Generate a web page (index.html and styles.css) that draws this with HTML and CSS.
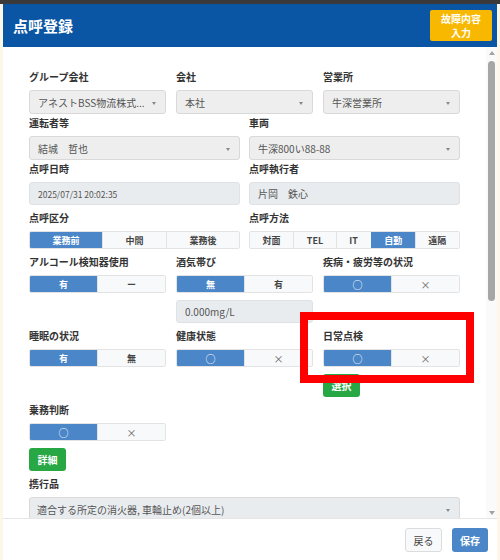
FILE: index.html
```html
<!DOCTYPE html>
<html lang="ja">
<head>
    <meta charset="UTF-8">
    <meta name="viewport" content="width=device-width, initial-scale=1.0">
    <title>点呼登録</title>
    <link rel="stylesheet" href="styles.css">
</head>
<body>
    <div class="modal">
        <div class="modal-header">
            <h2>点呼登録</h2>
            <button type="button" class="btn-fault">故障内容<br>入力</button>
        </div>

        <div class="modal-body">
            <form class="form-area">
                <!-- 会社情報 -->
                <div class="row cols-3 tight">
                    <div class="field">
                        <label>グループ会社</label>
                        <div class="select"><span>アネストBSS物流株式...</span><i class="caret"></i></div>
                    </div>
                    <div class="field">
                        <label>会社</label>
                        <div class="select"><span>本社</span><i class="caret"></i></div>
                    </div>
                    <div class="field">
                        <label>営業所</label>
                        <div class="select"><span>牛深営業所</span><i class="caret"></i></div>
                    </div>
                </div>

                <div class="row cols-2 tight">
                    <div class="field">
                        <label>運転者等</label>
                        <div class="select"><span>結城　哲也</span><i class="caret"></i></div>
                    </div>
                    <div class="field">
                        <label>車両</label>
                        <div class="select"><span>牛深800い88-88</span><i class="caret"></i></div>
                    </div>
                </div>

                <div class="row cols-2">
                    <div class="field">
                        <label>点呼日時</label>
                        <div class="input date">2025/07/31 20:02:35</div>
                    </div>
                    <div class="field">
                        <label>点呼執行者</label>
                        <div class="input">片岡　鉄心</div>
                    </div>
                </div>

                <!-- 点呼区分・方法 -->
                <div class="row cols-2">
                    <div class="field">
                        <label>点呼区分</label>
                        <div class="toggle auto">
                            <span class="on">業務前</span><span>中間</span><span>業務後</span>
                        </div>
                    </div>
                    <div class="field">
                        <label>点呼方法</label>
                        <div class="toggle auto">
                            <span>対面</span><span>TEL</span><span>IT</span><span class="on">自動</span><span>遠隔</span>
                        </div>
                    </div>
                </div>

                <div class="row cols-3">
                    <div class="field">
                        <label>アルコール検知器使用</label>
                        <div class="toggle">
                            <span class="on">有</span><span>ー</span>
                        </div>
                    </div>
                    <div class="field">
                        <label>酒気帯び</label>
                        <div class="toggle">
                            <span class="on">無</span><span>有</span>
                        </div>
                        <div class="input sub">0.000mg/L</div>
                    </div>
                    <div class="field">
                        <label>疾病・疲労等の状況</label>
                        <div class="toggle">
                            <span class="on mark">○</span><span class="mark">×</span>
                        </div>
                    </div>
                </div>

                <div class="row cols-3">
                    <div class="field">
                        <label>睡眠の状況</label>
                        <div class="toggle">
                            <span class="on">有</span><span>無</span>
                        </div>
                    </div>
                    <div class="field">
                        <label>健康状態</label>
                        <div class="toggle">
                            <span class="on mark">○</span><span class="mark">×</span>
                        </div>
                    </div>
                    <div class="field">
                        <label>日常点検</label>
                        <div class="toggle">
                            <span class="on mark">○</span><span class="mark">×</span>
                        </div>
                        <button type="button" class="btn-green">選択</button>
                    </div>
                </div>

                <div class="row cols-3">
                    <div class="field">
                        <label>乗務判断</label>
                        <div class="toggle">
                            <span class="on mark">○</span><span class="mark">×</span>
                        </div>
                        <button type="button" class="btn-green">詳細</button>
                    </div>
                </div>

                <div class="row">
                    <div class="field">
                        <label>携行品</label>
                        <div class="select wide"><span>適合する所定の消火器, 車輪止め(2個以上)</span><i class="caret"></i></div>
                    </div>
                </div>
            </form>

            <div class="scrollbar">
                <span class="arrow up"></span>
                <span class="thumb"></span>
                <span class="arrow down"></span>
            </div>
        </div>

        <div class="modal-footer">
            <button type="button" class="btn-back">戻る</button>
            <button type="button" class="btn-save">保存</button>
        </div>
    </div>

    <!-- 注目枠 -->
    <div class="highlight"></div>
</body>
</html>
```

FILE: styles.css
```css
body {
    font-family: "Noto Sans CJK JP", sans-serif;
    background-color: #fcf7e9;
    margin: 0;
    border-top: 4px solid #3a3a3a;
    height: 556px;
    overflow: hidden;
}
.modal {
    margin: 0 3px;
    height: 556px;
    display: flex;
    flex-direction: column;
    background-color: #fff;
}
.modal-header {
    height: 43px;
    flex-shrink: 0;
    display: flex;
    align-items: center;
    justify-content: space-between;
    padding: 0 5px 0 10px;
    background-color: #0b56a4;
    box-sizing: border-box;
}
.modal-header h2 {
    margin: 0;
    font-size: 15px;
    font-weight: bold;
    color: #fff;
}
.btn-fault {
    width: 62px;
    height: 31px;
    padding: 0;
    border: none;
    border-radius: 2px;
    background-color: #f9b800;
    color: #fff;
    font-family: inherit;
    font-size: 10px;
    font-weight: bold;
    line-height: 14px;
}
.modal-body {
    flex: 1;
    display: flex;
    min-height: 0;
}
.form-area {
    flex: 1;
    margin: 0;
    padding: 23px 26px 0 26px;
    overflow: hidden;
}
.row {
    margin-bottom: 6px;
}
.row.tight {
    margin-bottom: 2px;
}
.cols-3 {
    display: grid;
    grid-template-columns: repeat(3, 1fr);
    column-gap: 10px;
}
.cols-2 {
    display: grid;
    grid-template-columns: repeat(2, 1fr);
    column-gap: 9px;
}
.field label {
    display: block;
    margin-bottom: 6px;
    font-size: 10px;
    line-height: 14px;
    font-weight: bold;
    color: #333;
}
.select,
.input {
    display: flex;
    align-items: center;
    justify-content: space-between;
    box-sizing: border-box;
    height: 24px;
    padding: 0 9px 0 8px;
    border: 1px solid #d9d9d9;
    border-radius: 3px;
    background-color: #eeeeee;
    font-size: 10px;
    color: #555;
    white-space: nowrap;
}
.select.wide {
    background-color: #e9ecef;
    padding-left: 7px;
}
.input {
    height: 23px;
    background-color: #e9ecef;
    border-color: #dfe2e5;
}
.input.date {
    font-size: 8.5px;
}
.input.sub {
    margin-top: 7px;
}
.caret {
    width: 0;
    height: 0;
    border-left: 2px solid transparent;
    border-right: 2px solid transparent;
    border-top: 3px solid #888;
    margin-top: 2px;
}
.toggle {
    display: flex;
    height: 18px;
    box-sizing: border-box;
    border: 1px solid #e3e3e3;
    border-radius: 2px;
    overflow: hidden;
}
.toggle span {
    flex: 1 1 0;
    display: flex;
    align-items: center;
    justify-content: center;
    border-left: 1px solid #e3e3e3;
    background-color: #f8f9fa;
    font-size: 9px;
    font-weight: bold;
    color: #444;
}
.toggle.auto span {
    flex: 1 1 auto;
}
.toggle span:first-child {
    border-left: none;
}
.toggle span.on {
    background-color: #4a86c8;
    border-color: #4a86c8;
    color: #fff;
}
.toggle span.mark {
    font-weight: normal;
    font-size: 10px;
    color: #666;
}
.toggle span.on.mark {
    color: #fff;
}
.btn-green {
    display: block;
    width: 37px;
    height: 23px;
    margin-top: 7px;
    padding: 0;
    border: none;
    border-radius: 3px;
    background-color: #28a745;
    color: #fff;
    font-family: inherit;
    font-size: 10px;
    font-weight: bold;
}
.scrollbar {
    width: 11px;
    flex-shrink: 0;
    display: flex;
    flex-direction: column;
    align-items: center;
    padding: 4px 0 3px;
    box-sizing: border-box;
    background-color: #fafafa;
}
.arrow {
    width: 0;
    height: 0;
    border-left: 3px solid transparent;
    border-right: 3px solid transparent;
}
.arrow.up {
    border-bottom: 4px solid #a3a3a3;
}
.arrow.down {
    margin-top: auto;
    border-top: 4px solid #a3a3a3;
}
.thumb {
    width: 7px;
    height: 240px;
    margin-top: 6px;
    border-radius: 4px;
    background-color: #a6a6a6;
}
.modal-footer {
    height: 42px;
    flex-shrink: 0;
    display: flex;
    justify-content: flex-end;
    align-items: flex-start;
    gap: 10px;
    padding: 9px 9px 0 0;
    box-sizing: border-box;
    border-top: 1px solid #e6e6e6;
}
.btn-back,
.btn-save {
    height: 24px;
    padding: 0;
    border-radius: 3px;
    font-family: inherit;
    font-size: 10px;
}
.btn-back {
    width: 37px;
    border: 1px solid #dcdcdc;
    background-color: #f8f9fa;
    color: #444;
}
.btn-save {
    width: 36px;
    border: none;
    background-color: #4a86c8;
    color: #fff;
    font-weight: bold;
}
.highlight {
    position: absolute;
    left: 300px;
    top: 312px;
    width: 174px;
    height: 71px;
    box-sizing: border-box;
    border: 8px solid #ff0000;
}
```
